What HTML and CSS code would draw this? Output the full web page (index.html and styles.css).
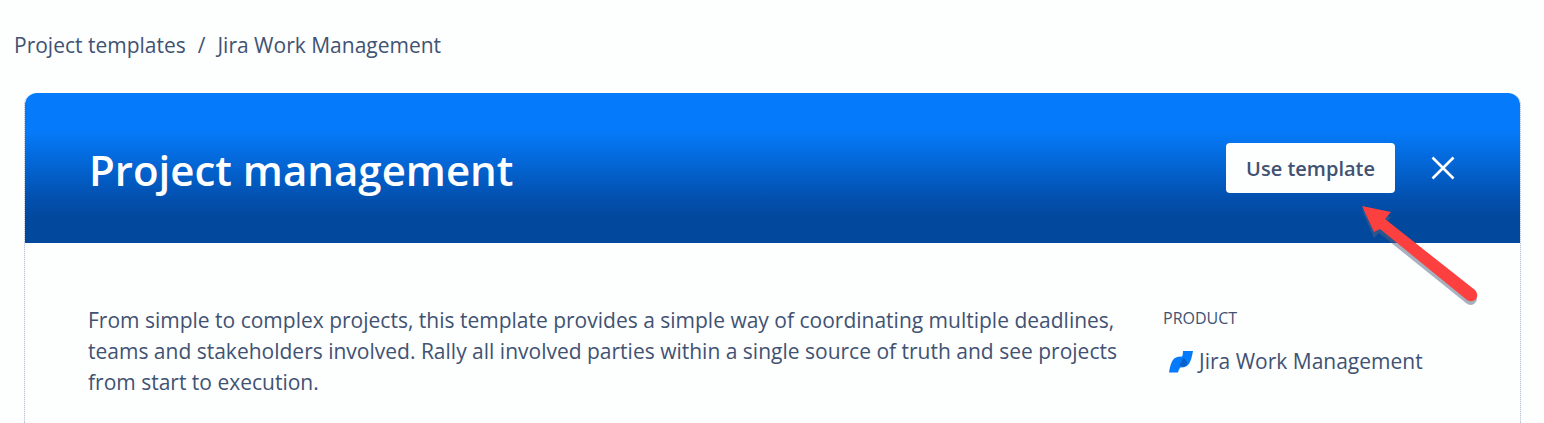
FILE: index.html
```html
<!DOCTYPE html>
<html lang="en">
<head>
<meta charset="utf-8">
<meta name="viewport" content="width=device-width, initial-scale=1">
<title>Project management template</title>
<link rel="stylesheet" href="styles.css">
</head>
<body>
<nav class="breadcrumbs" aria-label="Breadcrumb">
  <a href="#">Project templates</a>
  <span class="separator">/</span>
  <a href="#">Jira Work Management</a>
</nav>
<main class="card">
  <header class="banner">
    <h1 class="title">Project management</h1>
    <button class="use-button" type="button">Use template</button>
    <button class="close-button" type="button" aria-label="Close">
      <svg width="24" height="24" viewBox="0 0 24 24" fill="none" stroke="#fff" stroke-width="2.6"><path d="M1.500 1.500l21 21M22.500 1.500l-21 21"/></svg>
    </button>
    <svg class="arrow" width="124" height="104" viewBox="0 0 124 104" aria-hidden="true">
      <path class="arrow-shadow" d="M4 6L33 13L27 20L117 90Q121 95 117 99Q113 103 108 99L21 29L16 34Z"/>
      <path fill="#fc4040" d="M4 2L33 8L27 15L117 86Q121 90 118 95Q114 99 109 96L22 25L16 28Z"/>
    </svg>
  </header>
  <div class="content">
    <p class="description">From simple to complex projects, this template provides a simple way of coordinating multiple deadlines, teams and stakeholders involved. Rally all involved parties within a single source of truth and see projects from start to execution.</p>
    <aside class="product">
      <h2 class="product-label">Product</h2>
      <div class="product-name">
        <svg width="24" height="22" viewBox="0 0 24 22" aria-hidden="true"><path fill="#057bfb" d="M0 21.500C2 10 4 5.500 12 5.500L16 7C18 13 10 15 9 21.500Z"/><path fill="#057bfb" d="M14 0H24C22 11 20 16.500 12 16.500L9 14C9 8 14 9 14 0Z"/><path fill="#075fca" d="M14 7C13 10 12 12 10 14Q17 18 18 12Q18 9 14 7Z"/></svg>
        <span>Jira Work Management</span>
      </div>
    </aside>
  </div>
</main>
</body>
</html>
```
FILE: styles.css
```css
* { box-sizing: border-box; }
body {
  margin: 0;
  background: #fdfefe;
  color: #415272;
  font-family: "Open Sans", "Noto Sans", sans-serif;
  font-size: 21px;
  line-height: 31px;
}
.breadcrumbs {
  display: flex;
  gap: 12px;
  padding: 30px 14px 32px;
}
.breadcrumbs a { color: inherit; text-decoration: none; }
.card {
  margin: 0 23px 0 24px;
  min-height: 330px;
  border: 1px dotted #aab6cb;
  border-top: 0;
  border-bottom: 0;
  border-radius: 12px 12px 0 0;
}
.banner {
  position: relative;
  display: flex;
  align-items: center;
  height: 150px;
  padding: 0 65px 0 64px;
  border-radius: 12px 12px 0 0;
  background: linear-gradient(#057bfb 25%, #0250ae 70%, #02489c 85%);
}
.title {
  flex: 1;
  margin: 0;
  padding-top: 4px;
  color: #fff;
  font-size: 42px;
  font-weight: 600;
  line-height: 52px;
}
.use-button {
  height: 50px;
  padding: 0 20px;
  border: 0;
  border-radius: 4px;
  background: #fdfefe;
  color: #415272;
  font: 600 20px "Open Sans", "Noto Sans", sans-serif;
}
.close-button {
  display: flex;
  margin-left: 36px;
  padding: 0;
  border: 0;
  background: none;
}
.arrow {
  position: absolute;
  top: 111px;
  right: 38px;
}
.arrow-shadow { fill: #52627f; opacity: 0.5; }
.content {
  display: flex;
  justify-content: space-between;
  padding: 62px 63px 0;
}
.description { flex: 1; margin: 0 40px 0 0; }
.product { width: 294px; }
.product-label {
  margin: 0;
  font-size: 16px;
  font-weight: 500;
  line-height: 26px;
  text-transform: uppercase;
}
.product-name {
  display: flex;
  align-items: center;
  gap: 6px;
  padding: 15px 0 0 6px;
  white-space: nowrap;
}
```
